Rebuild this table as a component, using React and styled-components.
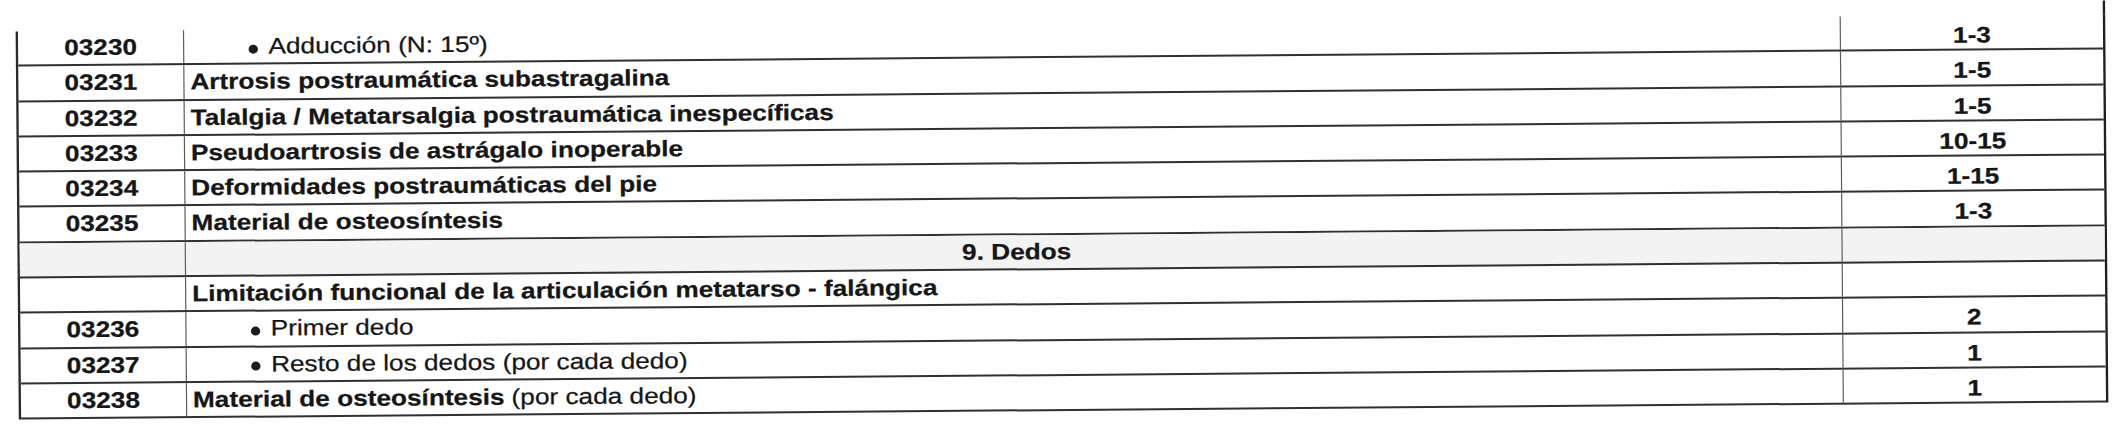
import React from "react";
import styled, { createGlobalStyle } from "styled-components";

const rows = [
  { code: "03230", text: "Adducción (N: 15º)", bullet: true, value: "1-3" },
  { code: "03231", text: "Artrosis postraumática subastragalina", bold: true, value: "1-5" },
  { code: "03232", text: "Talalgia / Metatarsalgia postraumática inespecíficas", bold: true, value: "1-5" },
  { code: "03233", text: "Pseudoartrosis de astrágalo inoperable", bold: true, value: "10-15" },
  { code: "03234", text: "Deformidades postraumáticas del pie", bold: true, value: "1-15" },
  { code: "03235", text: "Material de osteosíntesis", bold: true, value: "1-3" },
  { section: "9. Dedos" },
  { code: "", text: "Limitación funcional de la articulación metatarso - falángica", bold: true, value: "" },
  { code: "03236", text: "Primer dedo", bullet: true, value: "2" },
  { code: "03237", text: "Resto de los dedos (por cada dedo)", bullet: true, value: "1" },
  { code: "03238", text: "Material de osteosíntesis", bold: true, note: "(por cada dedo)", value: "1" },
];

const GlobalStyle = createGlobalStyle`
  html, body {
    margin: 0;
    padding: 0;
    background: #ffffff;
  }
  body {
    font-family: "Liberation Sans", Arial, sans-serif;
    color: #161616;
  }
`;

const Page = styled.div`
  width: 2126px;
  height: 429px;
  overflow: hidden;
  display: flex;
  justify-content: center;
  padding-top: 9px;
  box-sizing: border-box;
`;

// the scan is slightly skewed and stretched sideways
const Sheet = styled.div`
  width: 1786px;
  margin-left: -2px;
  transform: rotate(-0.47deg) scaleX(1.17);
  transform-origin: center center;
`;

const Spill = styled.div`
  height: 14px;
  border-right: 2px solid #1e1e1e;
`;

const Table = styled.div`
  border-left: 2px solid #2a2a2a;
  border-right: 2px solid #1e1e1e;
`;

const Row = styled.div`
  display: grid;
  grid-template-columns: 142px 1fr 224px;
  height: 35.3px;
  box-sizing: border-box;
  border-bottom: 2px solid #303030;
  background: ${(p) => (p.$shaded ? "#f3f3f3" : "transparent")};
`;

const Cell = styled.div`
  display: flex;
  align-items: center;
  font-size: 22.4px;
  line-height: 1;
  -webkit-text-stroke: 0.25px #161616;
  border-right: ${(p) => (p.$last ? "none" : "1px solid #5a5a5a")};
`;

const Code = styled(Cell)`
  justify-content: center;
  font-weight: bold;
  padding-top: 1px;
`;

const Desc = styled(Cell)`
  padding-left: ${(p) => (p.$bullet ? "55px" : "5px")};
  justify-content: ${(p) => (p.$center ? "center" : "flex-start")};
  font-weight: ${(p) => (p.$bold ? "bold" : "normal")};
  padding-top: 1px;
`;

const Value = styled(Cell)`
  justify-content: center;
  font-weight: bold;
  padding-top: 7px;
`;

const Dot = styled.span`
  display: inline-block;
  flex: none;
  width: 8px;
  height: 9px;
  border-radius: 50%;
  background: #1c1c1c;
  margin-right: 9px;
  margin-top: 4px;
`;

const Note = styled.span`
  font-weight: normal;
  margin-left: 6px;
`;

const App = () => {
  return (
    <>
      <GlobalStyle />
      <Page>
        <Sheet>
          <Spill />
          <Table>
            {rows.map((row, index) =>
              row.section ? (
                <Row key={index} $shaded>
                  <Code />
                  <Desc $bold $center>{row.section}</Desc>
                  <Value $last />
                </Row>
              ) : (
                <Row key={index}>
                  <Code>{row.code}</Code>
                  <Desc $bold={row.bold} $bullet={row.bullet}>
                    {row.bullet && <Dot />}
                    {row.text}
                    {row.note && <Note>{row.note}</Note>}
                  </Desc>
                  <Value $last>{row.value}</Value>
                </Row>
              )
            )}
          </Table>
        </Sheet>
      </Page>
    </>
  );
};

export default App;
